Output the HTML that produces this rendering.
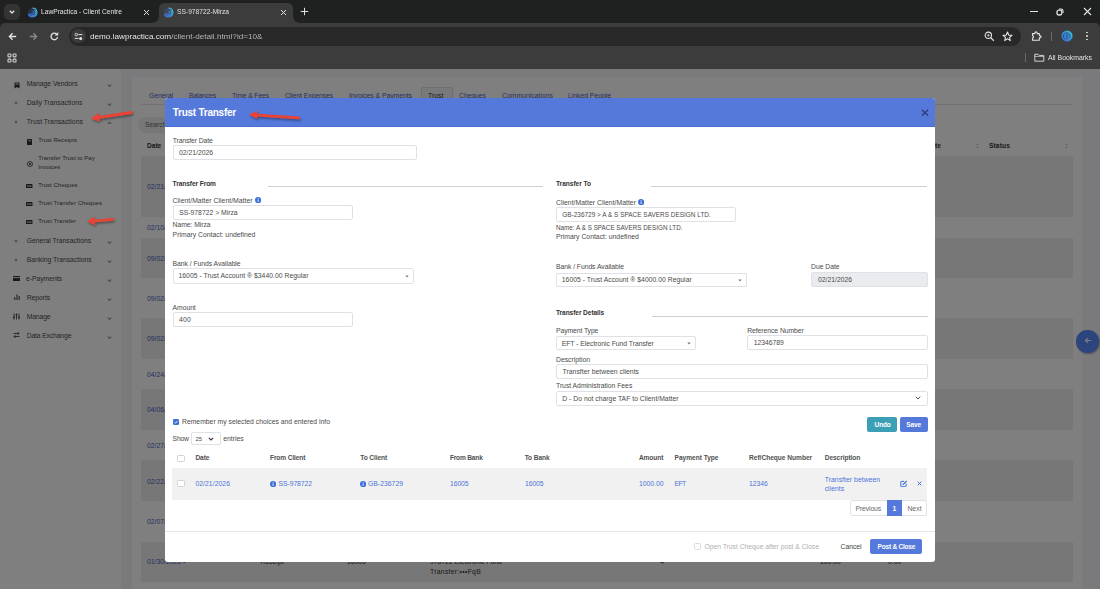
<!DOCTYPE html>
<html><head><meta charset="utf-8"><title>Trust Transfer</title>
<style>
html,body{margin:0;padding:0}
body{width:1100px;height:589px;overflow:hidden;position:relative;font-family:"Liberation Sans",sans-serif;background:#1f1f1f}
.t{position:absolute;white-space:nowrap;line-height:0}
.r{position:absolute;display:block}
</style></head><body>
<div class="r" style="left:0.00px;top:0.00px;width:1100.00px;height:69.00px;background:#1f2020"></div>
<div class="r" style="left:0.00px;top:23.00px;width:1100.00px;height:46.00px;background:#3c3c3c;border-radius:5px 5px 0 0"></div>
<div class="r" style="left:3.50px;top:3.50px;width:16.00px;height:16.00px;background:#333333;border-radius:5px"></div>
<svg class="r" style="left:7.50px;top:7.50px;" width="8" height="8" viewBox="0 0 8 8"><path d="M1.8 2.8 L4 5 L6.2 2.8" stroke="#e3e3e3" stroke-width="1.3" fill="none"/></svg>
<svg class="r" style="left:26.50px;top:6.50px;" width="11" height="11" viewBox="0 0 11 11"><defs><linearGradient id="g32" x1="0" y1="1" x2="1" y2="0"><stop offset="0" stop-color="#3a6ee0"/><stop offset="1" stop-color="#46c0d6"/></linearGradient></defs><path d="M5.5 1.2 A4.3 4.3 0 1 1 1.4 6.8" fill="none" stroke="url(#g32)" stroke-width="1.3"/><path d="M7.6 3.2 A3 3 0 1 1 3 6.6" fill="none" stroke="url(#g32)" stroke-width="1.1"/><path d="M5.6 4.4 A1.3 1.3 0 1 1 4.4 6" fill="none" stroke="url(#g32)" stroke-width="1"/><circle cx="5.5" cy="5.5" r="4.6" fill="#3a6ee0" opacity="0.25"/></svg>
<div class="t" style="left:41.00px;top:12.46px;font-size:7.90px;color:#e3e3e3;transform:scaleX(0.8424);transform-origin:0 0;">LawPractica - Client Centre</div>
<svg class="r" style="left:143.00px;top:8.50px;" width="7" height="7" viewBox="0 0 7 7"><path d="M1 1 L6 6 M6 1 L1 6" stroke="#e3e3e3" stroke-width="1"/></svg>
<svg class="r" style="left:151.00px;top:3.00px;" width="150" height="20" viewBox="0 0 150 20"><path d="M0 20 Q8 20 8 12 L8 6 Q8 0 14 0 L136 0 Q142 0 142 6 L142 12 Q142 20 150 20 Z" fill="#3c3c3c"/></svg>
<svg class="r" style="left:163.00px;top:6.50px;" width="11" height="11" viewBox="0 0 11 11"><defs><linearGradient id="g168" x1="0" y1="1" x2="1" y2="0"><stop offset="0" stop-color="#3a6ee0"/><stop offset="1" stop-color="#46c0d6"/></linearGradient></defs><path d="M5.5 1.2 A4.3 4.3 0 1 1 1.4 6.8" fill="none" stroke="url(#g168)" stroke-width="1.3"/><path d="M7.6 3.2 A3 3 0 1 1 3 6.6" fill="none" stroke="url(#g168)" stroke-width="1.1"/><path d="M5.6 4.4 A1.3 1.3 0 1 1 4.4 6" fill="none" stroke="url(#g168)" stroke-width="1"/><circle cx="5.5" cy="5.5" r="4.6" fill="#3a6ee0" opacity="0.25"/></svg>
<div class="t" style="left:177.00px;top:12.46px;font-size:7.90px;color:#e3e3e3;transform:scaleX(0.8460);transform-origin:0 0;">SS-978722-Mirza</div>
<svg class="r" style="left:280.00px;top:8.50px;" width="7" height="7" viewBox="0 0 7 7"><path d="M1 1 L6 6 M6 1 L1 6" stroke="#e3e3e3" stroke-width="1"/></svg>
<svg class="r" style="left:299.50px;top:7.00px;" width="9" height="9" viewBox="0 0 9 9"><path d="M4.5 0.8 V8.2 M0.8 4.5 H8.2" stroke="#e3e3e3" stroke-width="1"/></svg>
<div class="r" style="left:1030.00px;top:11.00px;width:7.50px;height:1.00px;background:#e3e3e3"></div>
<svg class="r" style="left:1056.00px;top:8.00px;" width="8" height="8" viewBox="0 0 8 8"><rect x="1" y="2.2" width="4.8" height="4.8" rx="1.8" fill="none" stroke="#e3e3e3" stroke-width="1.3"/><path d="M3 1 H5.2 A1.8 1.8 0 0 1 7 2.8 V5" fill="none" stroke="#e3e3e3" stroke-width="1.1"/></svg>
<svg class="r" style="left:1082.50px;top:7.00px;" width="9" height="9" viewBox="0 0 9 9"><path d="M1 1 L8 8 M8 1 L1 8" stroke="#e3e3e3" stroke-width="1.1"/></svg>
<svg class="r" style="left:8.00px;top:31.50px;" width="9" height="9" viewBox="0 0 9 9"><path d="M8.2 4.5 H1.8 M4.6 1.3 L1.4 4.5 L4.6 7.7" stroke="#e3e3e3" stroke-width="1.3" fill="none"/></svg>
<svg class="r" style="left:29.00px;top:31.50px;" width="9" height="9" viewBox="0 0 9 9"><path d="M0.8 4.5 H7.2 M4.4 1.3 L7.6 4.5 L4.4 7.7" stroke="#8a8a8a" stroke-width="1.3" fill="none"/></svg>
<svg class="r" style="left:49.50px;top:31.50px;" width="9" height="9" viewBox="0 0 9 9"><path d="M7.6 5 A3.3 3.3 0 1 1 6.6 2" stroke="#e3e3e3" stroke-width="1.3" fill="none"/><path d="M7.9 0.6 V3.2 H5.3 Z" fill="#e3e3e3" stroke="#e3e3e3" stroke-width="0.6"/></svg>
<div class="r" style="left:69.00px;top:26.50px;width:952.00px;height:19.00px;background:#282828;border-radius:10px"></div>
<div class="r" style="left:71.00px;top:28.50px;width:14.50px;height:14.50px;background:#3a3a3a;border-radius:8px"></div>
<svg class="r" style="left:74.00px;top:31.50px;" width="9" height="9" viewBox="0 0 9 9"><circle cx="2.3" cy="2.6" r="1.3" fill="none" stroke="#e3e3e3" stroke-width="0.9"/><path d="M4.4 2.6 H8.3 M0.7 6.4 H4.6" stroke="#e3e3e3" stroke-width="1"/><circle cx="6.7" cy="6.4" r="1.5" fill="#e3e3e3"/></svg>
<div class="t" style="left:90.00px;top:37.06px;font-size:7.90px;color:#e3e3e3;transform:scaleX(1.0337);transform-origin:0 0;">demo.lawpractica.com<span style="color:#b4b4b4">/client-detail.html?id=10&amp;</span></div>
<svg class="r" style="left:984.00px;top:31.00px;" width="11" height="11" viewBox="0 0 11 11"><circle cx="4.3" cy="4.3" r="3.2" fill="none" stroke="#e3e3e3" stroke-width="1.1"/><path d="M6.6 6.6 L9.8 9.8" stroke="#e3e3e3" stroke-width="1.3"/><path d="M4.3 2.8 V5.8 M2.8 4.3 H5.8" stroke="#e3e3e3" stroke-width="0.7"/></svg>
<svg class="r" style="left:1002.00px;top:31.00px;" width="11" height="11" viewBox="0 0 11 11"><path d="M5.5 1 L6.8 4.1 L10 4.3 L7.5 6.4 L8.3 9.6 L5.5 7.8 L2.7 9.6 L3.5 6.4 L1 4.3 L4.2 4.1 Z" fill="none" stroke="#e3e3e3" stroke-width="1.1" stroke-linejoin="round"/></svg>
<svg class="r" style="left:1030.50px;top:30.50px;" width="11" height="11" viewBox="0 0 11 11"><path d="M1.5 2.6 H3.9 V2 A1.1 1.1 0 0 1 6.1 2 V2.6 H8.3 V4.6 H8.9 A1.1 1.1 0 0 1 8.9 6.8 H8.3 V9.3 H1.5 V7 A0.9 0.9 0 0 0 1.5 4.8 Z" fill="none" stroke="#e3e3e3" stroke-width="1.1" stroke-linejoin="round"/></svg>
<div class="r" style="left:1051.00px;top:32.00px;width:1.00px;height:9.00px;background:#6a6a6a"></div>
<svg class="r" style="left:1061.00px;top:30.00px;" width="12" height="12" viewBox="0 0 12 12"><defs><linearGradient id="av" x1="0" y1="1" x2="1" y2="0"><stop offset="0" stop-color="#3a64d6"/><stop offset="1" stop-color="#3fb8cf"/></linearGradient></defs><circle cx="6" cy="6" r="5.6" fill="url(#av)"/><path d="M6.8 1.2 A4.9 4.9 0 0 1 10.6 7.2" fill="none" stroke="#3cc0c8" stroke-width="1"/><path d="M4 9.2 A3.4 3.4 0 1 1 8.6 8" fill="none" stroke="#1f3d7a" stroke-width="0.9" opacity="0.8"/><path d="M6 9.6 V4.6 M4.7 5.9 L6 4.6 L7.3 5.9" fill="none" stroke="#1f3d7a" stroke-width="0.9" opacity="0.8"/></svg>
<div class="r" style="left:1086.10px;top:31.50px;width:1.80px;height:1.80px;background:#e3e3e3;border-radius:1px"></div>
<div class="r" style="left:1086.10px;top:35.10px;width:1.80px;height:1.80px;background:#e3e3e3;border-radius:1px"></div>
<div class="r" style="left:1086.10px;top:38.70px;width:1.80px;height:1.80px;background:#e3e3e3;border-radius:1px"></div>
<svg class="r" style="left:6.50px;top:52.50px;" width="10" height="10" viewBox="0 0 10 10"><rect x="1" y="1" width="2.9" height="2.9" rx="0.6" fill="none" stroke="#d0d0d0" stroke-width="1.1"/><rect x="6.1" y="1" width="2.9" height="2.9" rx="0.6" fill="none" stroke="#d0d0d0" stroke-width="1.1"/><rect x="1" y="6.1" width="2.9" height="2.9" rx="0.6" fill="none" stroke="#d0d0d0" stroke-width="1.1"/><rect x="6.1" y="6.1" width="2.9" height="2.9" rx="0.6" fill="none" stroke="#d0d0d0" stroke-width="1.1"/></svg>
<div class="r" style="left:1024.50px;top:52.50px;width:1.00px;height:9.00px;background:#6a6a6a"></div>
<svg class="r" style="left:1034.00px;top:52.50px;" width="11" height="9" viewBox="0 0 11 9"><path d="M0.8 1.2 H4 L5.2 2.4 H9.8 V8.2 H0.8 Z" fill="none" stroke="#cfcfcf" stroke-width="1" stroke-linejoin="round"/><path d="M0.8 3.4 H9.8" stroke="#cfcfcf" stroke-width="0.8"/></svg>
<div class="t" style="left:1048.00px;top:57.64px;font-size:7.40px;color:#e3e3e3;transform:scaleX(0.9304);transform-origin:0 0;">All Bookmarks</div>
<div class="r" style="left:0.00px;top:69.00px;width:1100.00px;height:520.00px;background:#f4f5f8"></div>
<div class="r" style="left:0.00px;top:69.00px;width:120.50px;height:520.00px;background:#ffffff"></div>
<svg class="r" style="left:14.00px;top:81.50px;" width="6" height="7" viewBox="0 0 6 7"><path d="M0.5 0.5 H5.5 V6.5 L3 5 L0.5 6.5 Z" fill="#333"/><rect x="1.4" y="1.5" width="3.2" height="1" fill="#fff"/></svg>
<div class="t" style="left:26.70px;top:83.64px;font-size:6.80px;color:#4a4a4a;letter-spacing:-0.029px;">Manage Vendors</div>
<svg class="r" style="left:106.50px;top:83.50px;" width="5" height="3.5" viewBox="0 0 5 3.5"><path d="M0.4 0.6 L2.5 2.9 L4.6 0.6 L3.7 0.6 L2.5 1.9 L1.3 0.6 Z" fill="#555"/></svg>
<svg class="r" style="left:14.00px;top:101.00px;" width="4" height="4" viewBox="0 0 4 4"><path d="M2 0.6 V3.4 M0.6 2 H3.4" stroke="#666" stroke-width="0.7"/></svg>
<div class="t" style="left:26.70px;top:102.84px;font-size:6.80px;color:#4a4a4a;letter-spacing:0.008px;">Daily Transactions</div>
<svg class="r" style="left:106.50px;top:102.50px;" width="5" height="3.5" viewBox="0 0 5 3.5"><path d="M0.4 0.6 L2.5 2.9 L4.6 0.6 L3.7 0.6 L2.5 1.9 L1.3 0.6 Z" fill="#555"/></svg>
<svg class="r" style="left:14.00px;top:120.00px;" width="4" height="4" viewBox="0 0 4 4"><path d="M2 0.6 V3.4 M0.6 2 H3.4" stroke="#666" stroke-width="0.7"/></svg>
<div class="t" style="left:26.70px;top:121.64px;font-size:6.80px;color:#4a4a4a;letter-spacing:0.029px;">Trust Transactions</div>
<svg class="r" style="left:106.50px;top:121.00px;" width="5" height="3.5" viewBox="0 0 5 3.5"><path d="M0.4 2.9 L2.5 0.6 L4.6 2.9 L3.7 2.9 L2.5 1.6 L1.3 2.9 Z" fill="#555"/></svg>
<svg class="r" style="left:27.00px;top:138.50px;" width="5" height="6" viewBox="0 0 5 6"><rect x="0" y="0" width="5" height="6" rx="0.6" fill="#333"/><rect x="1.2" y="1.4" width="2.6" height="0.8" fill="#fff"/></svg>
<div class="t" style="left:38.20px;top:140.12px;font-size:6.00px;color:#4a4a4a;letter-spacing:0.018px;">Trust Receipts</div>
<svg class="r" style="left:26.50px;top:160.50px;" width="6" height="6" viewBox="0 0 6 6"><circle cx="3" cy="3" r="2.5" fill="none" stroke="#333" stroke-width="0.8"/><circle cx="3" cy="3" r="1" fill="#333"/></svg>
<div class="t" style="left:38.20px;top:157.92px;font-size:6.00px;color:#4a4a4a;letter-spacing:0.038px;">Transfer Trust to Pay</div>
<div class="t" style="left:38.20px;top:166.82px;font-size:6.00px;color:#4a4a4a;">Invoices</div>
<svg class="r" style="left:26.00px;top:183.50px;" width="6.5" height="4.2" viewBox="0 0 6.5 4.2"><rect x="0" y="0" width="6.5" height="4.2" rx="0.8" fill="#333"/><rect x="1.2" y="1.5" width="1.6" height="1.2" fill="#fff"/><rect x="3.4" y="1.5" width="2" height="1.2" fill="#fff"/></svg>
<svg class="r" style="left:26.00px;top:201.90px;" width="6.5" height="4.2" viewBox="0 0 6.5 4.2"><rect x="0" y="0" width="6.5" height="4.2" rx="0.8" fill="#333"/><rect x="1.2" y="1.5" width="1.6" height="1.2" fill="#fff"/><rect x="3.4" y="1.5" width="2" height="1.2" fill="#fff"/></svg>
<svg class="r" style="left:26.00px;top:219.90px;" width="6.5" height="4.2" viewBox="0 0 6.5 4.2"><rect x="0" y="0" width="6.5" height="4.2" rx="0.8" fill="#333"/><rect x="1.2" y="1.5" width="1.6" height="1.2" fill="#fff"/><rect x="3.4" y="1.5" width="2" height="1.2" fill="#fff"/></svg>
<div class="t" style="left:38.20px;top:185.02px;font-size:6.00px;color:#4a4a4a;letter-spacing:0.021px;">Trust Cheques</div>
<div class="t" style="left:38.20px;top:203.42px;font-size:6.00px;color:#4a4a4a;letter-spacing:0.045px;">Trust Transfer Cheques</div>
<div class="t" style="left:38.20px;top:221.42px;font-size:6.00px;color:#4a4a4a;letter-spacing:0.049px;">Trust Transfer</div>
<svg class="r" style="left:14.00px;top:238.50px;" width="4" height="4" viewBox="0 0 4 4"><path d="M2 0.6 V3.4 M0.6 2 H3.4" stroke="#666" stroke-width="0.7"/></svg>
<div class="t" style="left:26.70px;top:241.04px;font-size:6.80px;color:#4a4a4a;letter-spacing:-0.006px;">General Transactions</div>
<svg class="r" style="left:106.50px;top:240.50px;" width="5" height="3.5" viewBox="0 0 5 3.5"><path d="M0.4 0.6 L2.5 2.9 L4.6 0.6 L3.7 0.6 L2.5 1.9 L1.3 0.6 Z" fill="#555"/></svg>
<svg class="r" style="left:14.00px;top:257.50px;" width="4" height="4" viewBox="0 0 4 4"><path d="M2 0.6 V3.4 M0.6 2 H3.4" stroke="#666" stroke-width="0.7"/></svg>
<div class="t" style="left:26.70px;top:260.24px;font-size:6.80px;color:#4a4a4a;letter-spacing:-0.001px;">Banking Transactions</div>
<svg class="r" style="left:106.50px;top:259.50px;" width="5" height="3.5" viewBox="0 0 5 3.5"><path d="M0.4 0.6 L2.5 2.9 L4.6 0.6 L3.7 0.6 L2.5 1.9 L1.3 0.6 Z" fill="#555"/></svg>
<svg class="r" style="left:13.00px;top:275.50px;" width="7" height="5" viewBox="0 0 7 5"><rect x="0" y="0" width="7" height="5" rx="0.6" fill="#333"/><rect x="0" y="1.2" width="7" height="0.9" fill="#fff"/></svg>
<div class="t" style="left:26.00px;top:279.14px;font-size:6.80px;color:#4a4a4a;letter-spacing:-0.028px;">e-Payments</div>
<svg class="r" style="left:106.50px;top:278.50px;" width="5" height="3.5" viewBox="0 0 5 3.5"><path d="M0.4 0.6 L2.5 2.9 L4.6 0.6 L3.7 0.6 L2.5 1.9 L1.3 0.6 Z" fill="#555"/></svg>
<svg class="r" style="left:13.50px;top:294.00px;" width="6" height="6" viewBox="0 0 6 6"><rect x="0.3" y="3" width="1" height="3" fill="#333"/><rect x="2.5" y="0.5" width="1" height="5.5" fill="#333"/><rect x="4.7" y="2" width="1" height="4" fill="#333"/></svg>
<div class="t" style="left:26.70px;top:297.64px;font-size:6.80px;color:#4a4a4a;letter-spacing:-0.044px;">Reports</div>
<svg class="r" style="left:106.50px;top:297.50px;" width="5" height="3.5" viewBox="0 0 5 3.5"><path d="M0.4 0.6 L2.5 2.9 L4.6 0.6 L3.7 0.6 L2.5 1.9 L1.3 0.6 Z" fill="#555"/></svg>
<svg class="r" style="left:13.00px;top:313.00px;" width="7" height="7" viewBox="0 0 7 7"><path d="M1 0.5 V6.5 M3.5 0.5 V6.5 M6 0.5 V6.5" stroke="#333" stroke-width="0.8"/><rect x="0" y="3.8" width="2" height="1" fill="#333"/><rect x="2.5" y="1.5" width="2" height="1" fill="#333"/><rect x="5" y="3.8" width="2" height="1" fill="#333"/></svg>
<div class="t" style="left:26.70px;top:316.64px;font-size:6.80px;color:#4a4a4a;letter-spacing:-0.129px;">Manage</div>
<svg class="r" style="left:106.50px;top:316.50px;" width="5" height="3.5" viewBox="0 0 5 3.5"><path d="M0.4 0.6 L2.5 2.9 L4.6 0.6 L3.7 0.6 L2.5 1.9 L1.3 0.6 Z" fill="#555"/></svg>
<svg class="r" style="left:13.00px;top:332.00px;" width="7" height="6" viewBox="0 0 7 6"><path d="M0.5 1.5 H6 M4.5 0.2 L6.2 1.5 L4.5 2.8 M6.5 4.5 H1 M2.5 3.2 L0.8 4.5 L2.5 5.8" stroke="#333" stroke-width="0.8" fill="none"/></svg>
<div class="t" style="left:26.70px;top:335.64px;font-size:6.80px;color:#4a4a4a;letter-spacing:-0.146px;">Data Exchange</div>
<svg class="r" style="left:106.50px;top:335.50px;" width="5" height="3.5" viewBox="0 0 5 3.5"><path d="M0.4 0.6 L2.5 2.9 L4.6 0.6 L3.7 0.6 L2.5 1.9 L1.3 0.6 Z" fill="#555"/></svg>
<div class="r" style="left:132.00px;top:77.00px;width:950.00px;height:512.00px;background:#ffffff"></div>
<div class="t" style="left:149.00px;top:96.24px;font-size:6.80px;color:#4a63c4;letter-spacing:-0.027px;">General</div>
<div class="t" style="left:189.00px;top:96.24px;font-size:6.80px;color:#4a63c4;letter-spacing:-0.122px;">Balances</div>
<div class="t" style="left:232.00px;top:96.24px;font-size:6.80px;color:#4a63c4;letter-spacing:-0.117px;">Time &amp; Fees</div>
<div class="t" style="left:285.00px;top:96.24px;font-size:6.80px;color:#4a63c4;letter-spacing:-0.076px;">Client Expenses</div>
<div class="t" style="left:349.00px;top:96.24px;font-size:6.80px;color:#4a63c4;letter-spacing:-0.026px;">Invoices &amp; Payments</div>
<div class="t" style="left:459.00px;top:96.24px;font-size:6.80px;color:#4a63c4;letter-spacing:-0.031px;">Cheques</div>
<div class="t" style="left:502.00px;top:96.24px;font-size:6.80px;color:#4a63c4;letter-spacing:0.026px;">Communications</div>
<div class="t" style="left:568.00px;top:96.24px;font-size:6.80px;color:#4a63c4;letter-spacing:-0.008px;">Linked People</div>
<div class="r" style="left:420.50px;top:86.50px;width:30.00px;height:18.00px;background:#f1f2f5;border:1px solid #dadde2;border-bottom:none;border-radius:2px 2px 0 0"></div>
<div class="t" style="left:428.00px;top:96.24px;font-size:6.80px;color:#333;letter-spacing:0.053px;">Trust</div>
<div class="r" style="left:141.00px;top:104.00px;width:932.00px;height:1.00px;background:#e4e5e8"></div>
<div class="r" style="left:137.50px;top:117.00px;width:140.00px;height:16.00px;background:#efefef;border-radius:8px"></div>
<div class="t" style="left:145.00px;top:125.14px;font-size:6.80px;color:#666;">Search</div>
<div class="t" style="left:147.00px;top:145.71px;font-size:6.60px;color:#333;font-weight:bold;">Date</div>
<div class="t" style="left:912.00px;top:146.01px;font-size:6.60px;color:#333;font-weight:bold;letter-spacing:0.049px;">Due Date</div>
<div class="t" style="left:989.00px;top:146.01px;font-size:6.60px;color:#333;font-weight:bold;letter-spacing:0.138px;">Status</div>
<svg class="r" style="left:975.50px;top:142.50px;" width="3" height="6" viewBox="0 0 3 6"><path d="M1.5 0.3 L2.7 2 H0.3 Z M1.5 5.7 L2.7 4 H0.3 Z" fill="#bbb"/></svg>
<svg class="r" style="left:1064.50px;top:142.50px;" width="3" height="6" viewBox="0 0 3 6"><path d="M1.5 0.3 L2.7 2 H0.3 Z M1.5 5.7 L2.7 4 H0.3 Z" fill="#bbb"/></svg>
<div class="r" style="left:141.00px;top:156.00px;width:932.00px;height:61.00px;background:#eeeeee"></div>
<div class="r" style="left:141.00px;top:237.50px;width:932.00px;height:40.50px;background:#eeeeee"></div>
<div class="r" style="left:141.00px;top:318.00px;width:932.00px;height:41.00px;background:#eeeeee"></div>
<div class="r" style="left:141.00px;top:389.00px;width:932.00px;height:41.00px;background:#eeeeee"></div>
<div class="r" style="left:141.00px;top:460.00px;width:932.00px;height:41.00px;background:#eeeeee"></div>
<div class="r" style="left:141.00px;top:542.00px;width:932.00px;height:39.50px;background:#eeeeee"></div>
<div class="t" style="left:147.00px;top:186.94px;font-size:6.80px;color:#4a63c4;">02/21/2026</div>
<div class="t" style="left:147.00px;top:227.94px;font-size:6.80px;color:#4a63c4;">02/10/2026</div>
<div class="t" style="left:147.00px;top:258.94px;font-size:6.80px;color:#4a63c4;">09/02/2025</div>
<div class="t" style="left:147.00px;top:298.94px;font-size:6.80px;color:#4a63c4;">09/02/2025</div>
<div class="t" style="left:147.00px;top:338.94px;font-size:6.80px;color:#4a63c4;">09/02/2025</div>
<div class="t" style="left:147.00px;top:374.94px;font-size:6.80px;color:#4a63c4;">04/24/2025</div>
<div class="t" style="left:147.00px;top:409.94px;font-size:6.80px;color:#4a63c4;">04/06/2025</div>
<div class="t" style="left:147.00px;top:445.94px;font-size:6.80px;color:#4a63c4;">02/27/2025</div>
<div class="t" style="left:147.00px;top:481.94px;font-size:6.80px;color:#4a63c4;">02/22/2025</div>
<div class="t" style="left:147.00px;top:521.94px;font-size:6.80px;color:#4a63c4;">02/07/2025</div>
<div class="t" style="left:147.00px;top:562.34px;font-size:6.80px;color:#4a63c4;">01/30/2025 &#8226;</div>
<div class="t" style="left:260.50px;top:562.44px;font-size:6.80px;color:#333;">Receipt</div>
<div class="t" style="left:347.00px;top:562.44px;font-size:6.80px;color:#333;">16005</div>
<div class="t" style="left:430.00px;top:562.44px;font-size:6.80px;color:#333;">978722 Electronic Fund</div>
<div class="t" style="left:430.00px;top:571.64px;font-size:6.80px;color:#333;letter-spacing:0.296px;">Transfer:&#8226;&#8226;&#8226;FqB</div>
<div class="t" style="left:660.00px;top:562.44px;font-size:6.80px;color:#333;">4</div>
<div class="t" style="left:820.00px;top:562.44px;font-size:6.80px;color:#333;">100.00</div>
<div class="t" style="left:888.00px;top:562.44px;font-size:6.80px;color:#333;">0.00</div>
<div class="r" style="left:1076.00px;top:330.00px;width:22.60px;height:22.60px;background:#5a8aff;border-radius:50%;box-shadow:1px 1px 2px rgba(0,0,0,.35)"></div>
<svg class="r" style="left:1083.50px;top:337.00px;" width="8" height="7" viewBox="0 0 8 7"><path d="M7.2 3.5 H1.8 M4 1.2 L1.5 3.5 L4 5.8" stroke="#fff" stroke-width="1.1" fill="none"/></svg>
<div class="r" style="left:0.00px;top:69.00px;width:1100.00px;height:520.00px;background:rgba(0,0,0,0.5)"></div>
<div class="r" style="left:165.00px;top:98.00px;width:770.00px;height:463.50px;background:#fff;border-radius:3px;overflow:hidden"></div>
<div class="r" style="left:165.00px;top:98.00px;width:770.00px;height:29.00px;background:#5479db;border-radius:3px 3px 0 0;border-bottom:1px solid #4a6fd4;box-sizing:border-box"></div>
<div class="t" style="left:172.70px;top:112.78px;font-size:10.00px;color:#ffffff;font-weight:bold;letter-spacing:-0.242px;">Trust Transfer</div>
<svg class="r" style="left:920.50px;top:109.30px;" width="8" height="7.5" viewBox="0 0 8 7.5"><path d="M0.8 0.8 L7.2 6.7 M7.2 0.8 L0.8 6.7" stroke="#2c3c74" stroke-width="1.2"/></svg>
<div class="t" style="left:172.70px;top:140.69px;font-size:6.80px;color:#4a4a4a;letter-spacing:-0.101px;">Transfer Date</div>
<div class="r" style="left:172.50px;top:145.00px;width:244.00px;height:15.00px;background:#fff;border:1px solid #dfe1e6;border-radius:2px;box-sizing:border-box"></div>
<div class="t" style="left:179.00px;top:152.89px;font-size:6.80px;color:#4a4a4a;letter-spacing:-0.003px;">02/21/2026</div>
<div class="t" style="left:172.60px;top:184.16px;font-size:6.60px;color:#333;font-weight:bold;letter-spacing:-0.083px;">Transfer From</div>
<div class="r" style="left:268.30px;top:186.00px;width:275.00px;height:1.30px;background:#cfcfcf"></div>
<div class="t" style="left:556.00px;top:184.16px;font-size:6.60px;color:#333;font-weight:bold;letter-spacing:-0.041px;">Transfer To</div>
<div class="r" style="left:651.40px;top:186.00px;width:276.00px;height:1.30px;background:#cfcfcf"></div>
<div class="t" style="left:172.60px;top:200.79px;font-size:6.80px;color:#4a4a4a;letter-spacing:0.038px;">Client/Matter Client/Matter</div>
<svg class="r" style="left:254.80px;top:197.30px;" width="6.2" height="6.2" viewBox="0 0 6.2 6.2"><circle cx="3.1" cy="3.1" r="3.1" fill="#3d6fd9"/><rect x="2.65" y="2.5" width="0.9" height="2.4" fill="#fff"/><rect x="2.65" y="1.3" width="0.9" height="0.8" fill="#fff"/></svg>
<div class="r" style="left:172.50px;top:205.00px;width:180.30px;height:15.00px;background:#fff;border:1px solid #dfe1e6;border-radius:2px;box-sizing:border-box"></div>
<div class="t" style="left:179.20px;top:213.39px;font-size:6.80px;color:#4a4a4a;letter-spacing:0.006px;">SS-978722 &gt; Mirza</div>
<div class="t" style="left:172.60px;top:225.29px;font-size:6.80px;color:#4a4a4a;letter-spacing:-0.058px;">Name: Mirza</div>
<div class="t" style="left:172.60px;top:234.79px;font-size:6.80px;color:#4a4a4a;letter-spacing:0.016px;">Primary Contact: undefined</div>
<div class="t" style="left:556.00px;top:202.69px;font-size:6.80px;color:#4a4a4a;letter-spacing:0.038px;">Client/Matter Client/Matter</div>
<svg class="r" style="left:637.90px;top:199.10px;" width="6.2" height="6.2" viewBox="0 0 6.2 6.2"><circle cx="3.1" cy="3.1" r="3.1" fill="#3d6fd9"/><rect x="2.65" y="2.5" width="0.9" height="2.4" fill="#fff"/><rect x="2.65" y="1.3" width="0.9" height="0.8" fill="#fff"/></svg>
<div class="r" style="left:556.00px;top:207.00px;width:180.30px;height:15.40px;background:#fff;border:1px solid #dfe1e6;border-radius:2px;box-sizing:border-box"></div>
<div class="t" style="left:562.30px;top:215.43px;font-size:6.40px;color:#4a4a4a;letter-spacing:0.030px;">GB-236729 &gt; A &amp; S SPACE SAVERS DESIGN LTD.</div>
<div class="t" style="left:556.00px;top:227.87px;font-size:6.30px;color:#4a4a4a;letter-spacing:0.016px;">Name: A &amp; S SPACE SAVERS DESIGN LTD.</div>
<div class="t" style="left:556.00px;top:236.69px;font-size:6.80px;color:#4a4a4a;letter-spacing:0.016px;">Primary Contact: undefined</div>
<div class="t" style="left:172.60px;top:263.89px;font-size:6.80px;color:#4a4a4a;letter-spacing:-0.048px;">Bank / Funds Available</div>
<div class="r" style="left:172.50px;top:268.40px;width:241.70px;height:15.20px;background:#fff;border:1px solid #dfe1e6;border-radius:2px;box-sizing:border-box"></div>
<div class="t" style="left:178.50px;top:276.49px;font-size:6.80px;color:#4a4a4a;letter-spacing:0.025px;">16005 - Trust Account &#174; $3440.00 Regular</div>
<svg class="r" style="left:404.60px;top:274.70px;" width="4" height="3" viewBox="0 0 4 3"><path d="M0.3 0.5 H3.7 L2 2.5 Z" fill="#777"/></svg>
<div class="t" style="left:556.00px;top:267.39px;font-size:6.80px;color:#4a4a4a;letter-spacing:-0.048px;">Bank / Funds Available</div>
<div class="r" style="left:556.00px;top:272.60px;width:191.00px;height:14.40px;background:#fff;border:1px solid #dfe1e6;border-radius:2px;box-sizing:border-box"></div>
<div class="t" style="left:561.80px;top:279.99px;font-size:6.80px;color:#4a4a4a;letter-spacing:0.025px;">16005 - Trust Account &#174; $4000.00 Regular</div>
<svg class="r" style="left:737.70px;top:278.50px;" width="4" height="3" viewBox="0 0 4 3"><path d="M0.3 0.5 H3.7 L2 2.5 Z" fill="#777"/></svg>
<div class="t" style="left:811.00px;top:267.39px;font-size:6.80px;color:#4a4a4a;letter-spacing:-0.028px;">Due Date</div>
<div class="r" style="left:811.00px;top:272.30px;width:117.00px;height:14.70px;background:#e9ecef;border:1px solid #dfe1e6;border-radius:2px;box-sizing:border-box"></div>
<div class="t" style="left:818.00px;top:279.99px;font-size:6.80px;color:#4a4a4a;letter-spacing:-0.003px;">02/21/2026</div>
<div class="t" style="left:172.60px;top:307.89px;font-size:6.80px;color:#4a4a4a;letter-spacing:-0.056px;">Amount</div>
<div class="r" style="left:172.50px;top:312.20px;width:180.70px;height:15.30px;background:#fff;border:1px solid #dfe1e6;border-radius:2px;box-sizing:border-box"></div>
<div class="t" style="left:179.00px;top:320.29px;font-size:6.80px;color:#4a4a4a;letter-spacing:0.219px;">400</div>
<div class="t" style="left:556.00px;top:312.76px;font-size:6.60px;color:#333;font-weight:bold;letter-spacing:-0.082px;">Transfer Details</div>
<div class="r" style="left:651.50px;top:315.50px;width:276.00px;height:1.30px;background:#cfcfcf"></div>
<div class="t" style="left:556.00px;top:330.79px;font-size:6.80px;color:#4a4a4a;letter-spacing:-0.087px;">Payment Type</div>
<div class="r" style="left:556.00px;top:335.50px;width:139.70px;height:14.90px;background:#fff;border:1px solid #dfe1e6;border-radius:2px;box-sizing:border-box"></div>
<div class="t" style="left:561.70px;top:343.59px;font-size:6.80px;color:#4a4a4a;letter-spacing:-0.028px;">EFT - Electronic Fund Transfer</div>
<svg class="r" style="left:687.20px;top:341.70px;" width="4" height="3" viewBox="0 0 4 3"><path d="M0.3 0.5 H3.7 L2 2.5 Z" fill="#777"/></svg>
<div class="t" style="left:747.20px;top:330.69px;font-size:6.80px;color:#4a4a4a;letter-spacing:-0.053px;">Reference Number</div>
<div class="r" style="left:747.00px;top:335.30px;width:180.70px;height:14.90px;background:#fff;border:1px solid #dfe1e6;border-radius:2px;box-sizing:border-box"></div>
<div class="t" style="left:753.70px;top:343.39px;font-size:6.80px;color:#4a4a4a;letter-spacing:-0.006px;">12346789</div>
<div class="t" style="left:556.00px;top:359.89px;font-size:6.80px;color:#4a4a4a;letter-spacing:-0.001px;">Description</div>
<div class="r" style="left:556.00px;top:364.20px;width:371.70px;height:15.30px;background:#fff;border:1px solid #dfe1e6;border-radius:2px;box-sizing:border-box"></div>
<div class="t" style="left:562.60px;top:372.29px;font-size:6.80px;color:#4a4a4a;letter-spacing:0.028px;">Transfter between clients</div>
<div class="t" style="left:556.00px;top:386.29px;font-size:6.80px;color:#4a4a4a;letter-spacing:-0.022px;">Trust Administration Fees</div>
<div class="r" style="left:556.00px;top:391.30px;width:371.70px;height:14.30px;background:#fff;border:1px solid #dfe1e6;border-radius:2px;box-sizing:border-box"></div>
<div class="t" style="left:562.30px;top:399.09px;font-size:6.80px;color:#4a4a4a;letter-spacing:0.014px;">D - Do not charge TAF to Client/Matter</div>
<svg class="r" style="left:914.50px;top:396.00px;" width="6" height="4" viewBox="0 0 6 4"><path d="M0.7 0.7 L3 3 L5.3 0.7" stroke="#444" stroke-width="0.9" fill="none"/></svg>
<div class="r" style="left:867.40px;top:417.40px;width:29.60px;height:15.00px;background:#3ba0b6;border-radius:2px"></div>
<div class="t" style="left:874.60px;top:425.36px;font-size:6.60px;color:#fff;font-weight:bold;letter-spacing:-0.215px;">Undo</div>
<div class="r" style="left:899.60px;top:417.40px;width:28.00px;height:15.00px;background:#5479db;border-radius:2px"></div>
<div class="t" style="left:906.20px;top:425.36px;font-size:6.60px;color:#fff;font-weight:bold;letter-spacing:-0.103px;">Save</div>
<div class="r" style="left:172.60px;top:419.00px;width:6.00px;height:6.00px;background:#3d6fd9;border-radius:1.2px"></div>
<svg class="r" style="left:172.60px;top:419.00px;" width="6" height="6" viewBox="0 0 6 6"><path d="M1.4 3.1 L2.6 4.2 L4.7 1.8" stroke="#fff" stroke-width="0.8" fill="none"/></svg>
<div class="t" style="left:182.00px;top:422.39px;font-size:6.80px;color:#4a4a4a;letter-spacing:0.005px;">Remember my selected choices and entered info</div>
<div class="t" style="left:172.60px;top:439.09px;font-size:6.80px;color:#4a4a4a;letter-spacing:-0.252px;">Show</div>
<div class="r" style="left:190.80px;top:432.30px;width:30.00px;height:12.70px;background:#fff;border:1px solid #dfe1e6;border-radius:2px;box-sizing:border-box"></div>
<div class="t" style="left:195.50px;top:439.37px;font-size:6.00px;color:#4a4a4a;letter-spacing:-0.187px;">25</div>
<svg class="r" style="left:208.00px;top:437.00px;" width="6" height="4" viewBox="0 0 6 4"><path d="M0.8 0.8 L3 3 L5.2 0.8" stroke="#333" stroke-width="1.1" fill="none"/></svg>
<div class="t" style="left:223.20px;top:439.09px;font-size:6.80px;color:#4a4a4a;letter-spacing:0.013px;">entries</div>
<div class="r" style="left:177.40px;top:454.50px;width:7.20px;height:7.20px;background:#fff;border:1px solid #cfd2d6;border-radius:1.5px;box-sizing:border-box"></div>
<div class="t" style="left:195.40px;top:458.36px;font-size:6.60px;color:#505050;font-weight:bold;letter-spacing:-0.051px;">Date</div>
<div class="t" style="left:270.00px;top:458.36px;font-size:6.60px;color:#505050;font-weight:bold;letter-spacing:-0.115px;">From Client</div>
<div class="t" style="left:360.20px;top:458.36px;font-size:6.60px;color:#505050;font-weight:bold;letter-spacing:-0.082px;">To Client</div>
<div class="t" style="left:449.90px;top:458.36px;font-size:6.60px;color:#505050;font-weight:bold;letter-spacing:-0.186px;">From Bank</div>
<div class="t" style="left:524.70px;top:458.36px;font-size:6.60px;color:#505050;font-weight:bold;letter-spacing:-0.106px;">To Bank</div>
<div class="t" style="left:638.90px;top:458.36px;font-size:6.60px;color:#505050;font-weight:bold;letter-spacing:-0.071px;">Amount</div>
<div class="t" style="left:674.50px;top:458.36px;font-size:6.60px;color:#505050;font-weight:bold;letter-spacing:-0.021px;">Payment Type</div>
<div class="t" style="left:749.00px;top:458.36px;font-size:6.60px;color:#505050;font-weight:bold;letter-spacing:-0.014px;">Ref/Cheque Number</div>
<div class="t" style="left:824.70px;top:458.36px;font-size:6.60px;color:#505050;font-weight:bold;letter-spacing:-0.064px;">Description</div>
<div class="r" style="left:172.30px;top:468.00px;width:755.00px;height:31.80px;background:#f1f1f1"></div>
<div class="r" style="left:177.40px;top:480.30px;width:7.20px;height:7.20px;background:#fff;border:1px solid #cfd2d6;border-radius:1.5px;box-sizing:border-box"></div>
<div class="t" style="left:195.40px;top:484.29px;font-size:6.80px;color:#4d74d8;letter-spacing:0.057px;">02/21/2026</div>
<svg class="r" style="left:270.10px;top:480.50px;" width="6.2" height="6.2" viewBox="0 0 6.2 6.2"><circle cx="3.1" cy="3.1" r="3.1" fill="#3d6fd9"/><rect x="2.65" y="2.5" width="0.9" height="2.4" fill="#fff"/><rect x="2.65" y="1.3" width="0.9" height="0.8" fill="#fff"/></svg>
<div class="t" style="left:278.60px;top:484.29px;font-size:6.80px;color:#4d74d8;letter-spacing:-0.080px;">SS-978722</div>
<svg class="r" style="left:359.60px;top:480.50px;" width="6.2" height="6.2" viewBox="0 0 6.2 6.2"><circle cx="3.1" cy="3.1" r="3.1" fill="#3d6fd9"/><rect x="2.65" y="2.5" width="0.9" height="2.4" fill="#fff"/><rect x="2.65" y="1.3" width="0.9" height="0.8" fill="#fff"/></svg>
<div class="t" style="left:368.00px;top:484.29px;font-size:6.80px;color:#4d74d8;letter-spacing:0.025px;">GB-236729</div>
<div class="t" style="left:450.00px;top:484.29px;font-size:6.80px;color:#4d74d8;letter-spacing:-0.081px;">16005</div>
<div class="t" style="left:525.00px;top:484.29px;font-size:6.80px;color:#4d74d8;letter-spacing:-0.081px;">16005</div>
<div class="t" style="left:639.00px;top:484.29px;font-size:6.80px;color:#4d74d8;letter-spacing:-0.025px;">1000.00</div>
<div class="t" style="left:674.50px;top:484.29px;font-size:6.80px;color:#4d74d8;letter-spacing:-0.614px;">EFT</div>
<div class="t" style="left:749.00px;top:484.29px;font-size:6.80px;color:#4d74d8;letter-spacing:-0.021px;">12346</div>
<div class="t" style="left:824.70px;top:479.69px;font-size:6.80px;color:#4d74d8;letter-spacing:0.056px;">Transfter between</div>
<div class="t" style="left:824.70px;top:488.59px;font-size:6.80px;color:#4d74d8;letter-spacing:0.032px;">clients</div>
<svg class="r" style="left:899.50px;top:479.80px;" width="7.5" height="7.5" viewBox="0 0 7.5 7.5"><path d="M4 1.4 H1.3 A0.5 0.5 0 0 0 0.8 1.9 V6.2 A0.5 0.5 0 0 0 1.3 6.7 H5.6 A0.5 0.5 0 0 0 6.1 6.2 V3.6" stroke="#3d6fd9" stroke-width="1" fill="none"/><path d="M2.7 4.9 L6.7 0.9" stroke="#3d6fd9" stroke-width="1.2"/></svg>
<svg class="r" style="left:916.80px;top:481.40px;" width="5" height="5" viewBox="0 0 5 5"><path d="M0.7 0.7 L4.3 4.3 M4.3 0.7 L0.7 4.3" stroke="#3d6fd9" stroke-width="1"/></svg>
<div class="r" style="left:849.60px;top:500.00px;width:77.60px;height:15.50px;background:#fff;border:1px solid #dfe1e6;border-radius:2px;box-sizing:border-box"></div>
<div class="r" style="left:887.00px;top:500.00px;width:14.80px;height:15.50px;background:#5479db"></div>
<div class="t" style="left:855.50px;top:508.89px;font-size:6.80px;color:#666;letter-spacing:-0.119px;">Previous</div>
<div class="t" style="left:892.60px;top:508.89px;font-size:6.80px;color:#fff;font-weight:bold;">1</div>
<div class="t" style="left:907.40px;top:508.89px;font-size:6.80px;color:#666;letter-spacing:0.055px;">Next</div>
<div class="r" style="left:165.00px;top:531.00px;width:770.00px;height:1.00px;background:#e6e6e6"></div>
<div class="r" style="left:694.30px;top:542.50px;width:7.00px;height:7.00px;background:#fff;border:1px solid #dcdcdc;border-radius:1.6px;box-sizing:border-box"></div>
<div class="t" style="left:704.40px;top:546.89px;font-size:6.80px;color:#b0b0b0;letter-spacing:-0.019px;">Open Trust Cheque after post &amp; Close</div>
<div class="t" style="left:840.50px;top:546.69px;font-size:6.80px;color:#444;letter-spacing:-0.011px;">Cancel</div>
<div class="r" style="left:870.20px;top:539.00px;width:51.80px;height:15.00px;background:#5479db;border-radius:2px"></div>
<div class="t" style="left:877.60px;top:547.16px;font-size:6.60px;color:#fff;font-weight:bold;letter-spacing:-0.267px;">Post &amp; Close</div>
<svg class="r" style="left:0;top:0" width="1100" height="589" viewBox="0 0 1100 589"><defs><filter id="sh" x="-20%" y="-50%" width="140%" height="200%"><feDropShadow dx="0.8" dy="1.5" stdDeviation="1.2" flood-color="#000" flood-opacity="0.45"/></filter></defs><g filter="url(#sh)"><path d="M99.15 117.3 L131.3 112.5" stroke="#ea4335" stroke-width="2.8" stroke-linecap="round"/><path d="M90.9 118.4 L98.5 113.1 L99.8 121.5 Z" fill="#ea4335"/><path d="M94.85 221 L112.8 219.4" stroke="#ea4335" stroke-width="2.6" stroke-linecap="round"/><path d="M87 221.2 L94.5 216.8 L95.2 225.2 Z" fill="#ea4335"/><path d="M257.2 115.1 L298.6 117.8" stroke="#ea4335" stroke-width="2.8" stroke-linecap="round"/><path d="M248.9 114.5 L257.2 111.1 L257.2 119.1 Z" fill="#ea4335"/></g></svg>
</body></html>
